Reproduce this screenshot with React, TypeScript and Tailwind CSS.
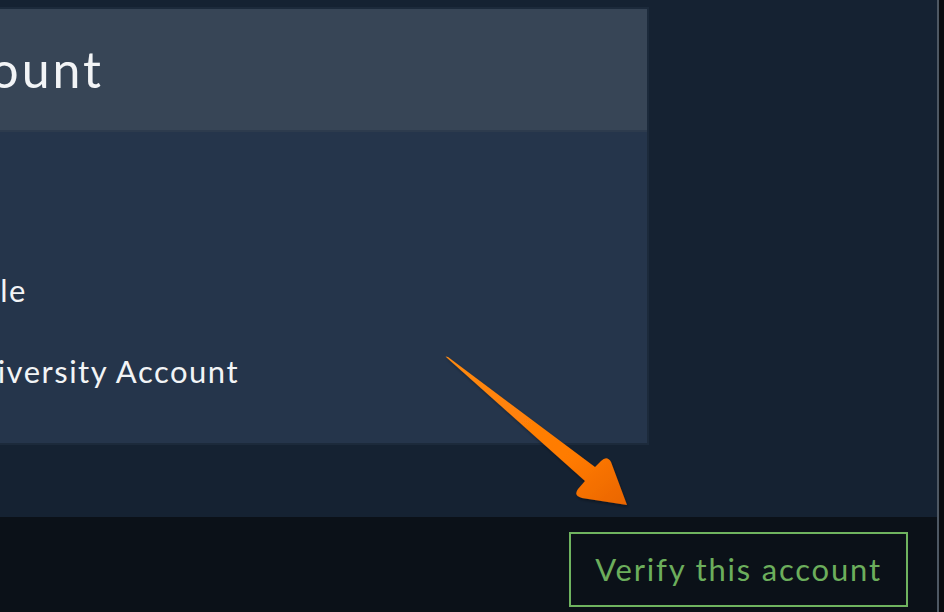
import React from 'react';

const font = { fontFamily: 'Lato, "Liberation Sans", sans-serif' };

const Arrow: React.FC = () => (
  <svg
    className="absolute left-0 top-0 pointer-events-none"
    width="944"
    height="612"
    viewBox="0 0 944 612"
  >
    <defs>
      <linearGradient id="arrowFill" x1="0" y1="0" x2="1" y2="1">
        <stop offset="0" stopColor="#ff8a12" />
        <stop offset="0.7" stopColor="#ff7a00" />
        <stop offset="1" stopColor="#e96500" />
      </linearGradient>
      <filter id="arrowShadow" x="-10%" y="-10%" width="130%" height="130%">
        <feDropShadow dx="1" dy="2" stdDeviation="1.5" floodColor="#000" floodOpacity="0.35" />
      </filter>
    </defs>
    <path
      d="M446 357 Q445 356 448 357 L595 467 L601 461 Q607 455 611 462 L627 505 L582 498 Q573 496 578 489 L585 481 Z"
      fill="url(#arrowFill)"
      filter="url(#arrowShadow)"
    />
  </svg>
);

const App: React.FC = () => {
  return (
    <div className="relative w-[944px] h-[612px] overflow-hidden flex bg-[#0a0d11]" style={font}>
      {/* Main window */}
      <div className="w-[937px] h-full flex flex-col">
        <div className="h-[517px] bg-[#152232] pt-[7px] overflow-hidden">
          {/* Panel, cut off on the left */}
          <div className="ml-[-400px] w-[1049px] h-[438px] border-2 border-[#1c2a3b] flex flex-col">
            <div className="h-[121px] bg-[#374556] flex items-center">
              <div className="w-[502px] flex justify-end whitespace-nowrap text-[50px] tracking-[3px] leading-none text-[#f2f4f6] pb-[2px]">
                Account
              </div>
            </div>
            <div className="h-[2px] bg-[#2d3b4d]" />
            <div className="flex-1 bg-[#25354b] flex flex-col pt-[141px] gap-[47px]">
              <div className="w-[425px] flex justify-end whitespace-nowrap text-[31px] tracking-[1.5px] leading-[34px] text-[#f2f4f6]">
                Profile
              </div>
              <div className="w-[637px] flex justify-end whitespace-nowrap text-[31px] tracking-[1.5px] leading-[34px] text-[#f2f4f6]">
                University Account
              </div>
            </div>
          </div>
        </div>
        {/* Footer */}
        <div className="flex-1 bg-[#0b1118] flex justify-end items-start pt-[15px] pr-[29px]">
          <button className="w-[339px] h-[75px] border-2 border-[#6fb35f] text-[#6cae5c] text-[31px] tracking-[1.8px] leading-none flex items-center justify-center">
            Verify this account
          </button>
        </div>
      </div>
      {/* Scrollbar edge */}
      <div className="w-[2px] h-full bg-[#4e5863]" />
      <div className="flex-1 h-full bg-[#090c10]" />
      <Arrow />
    </div>
  );
};

export default App;
